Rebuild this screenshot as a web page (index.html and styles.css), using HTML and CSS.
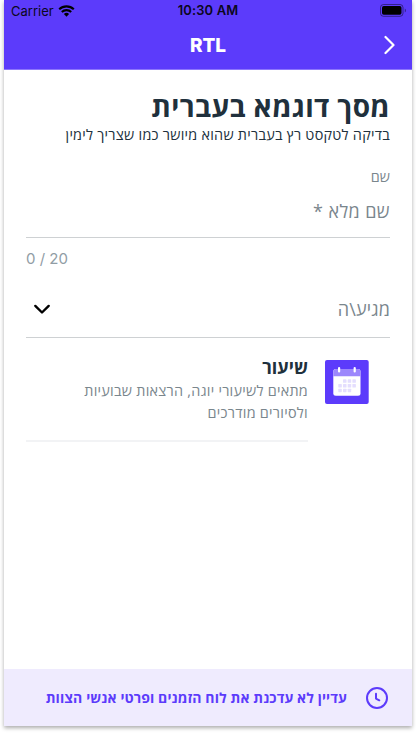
FILE: index.html
```html
<!DOCTYPE html>
<html lang="he" dir="rtl">
<head>
<meta charset="utf-8">
<meta name="viewport" content="width=device-width, initial-scale=1">
<title>RTL</title>
<link rel="stylesheet" href="styles.css">
</head>
<body>
<div class="phone">
  <header class="top">
    <div class="status" dir="ltr">
      <div class="carrier"><span>Carrier</span>
        <svg class="wifi" width="17" height="12" viewBox="0 0 17 12"><path d="M1.2 4.3a10.6 10.6 0 0 1 14.6 0M3.8 7a6.8 6.8 0 0 1 9.4 0" fill="none" stroke="#000" stroke-width="2.1"/><path d="M5.9 9a3.8 3.8 0 0 1 5.2 0L8.5 11.7z"/></svg>
      </div>
      <span class="clock">10:30 AM</span>
      <svg class="battery" width="27" height="13" viewBox="0 0 27 13"><rect x=".5" y=".5" width="22.5" height="11.8" rx="3" fill="none" stroke="#000" stroke-opacity=".45"/><rect x="2" y="2" width="19.5" height="8.8" rx="1.7"/><path d="M24.8 4.5v4c1.4-.7 1.4-3.3 0-4z" opacity=".5"/></svg>
    </div>
    <div class="nav">
      <h1 class="nav-title">RTL</h1>
      <svg class="back" width="12" height="20" viewBox="0 0 12 20"><path d="M1.5 2l8 8-8 8" fill="none" stroke="#fff" stroke-width="2.2" stroke-linecap="round" stroke-linejoin="round"/></svg>
    </div>
  </header>
  <main class="content">
    <h2 class="title">מסך דוגמא בעברית</h2>
    <p class="subtitle">בדיקה לטקסט רץ בעברית שהוא מיושר כמו שצריך לימין</p>
    <div class="label">שם</div>
    <div class="field name-field"><span class="name">שם מלא *</span></div>
    <div class="counter" dir="ltr">0 / 20</div>
    <div class="field select-field"><span class="select">מגיע\ה</span>
      <svg class="chevron" width="18" height="12" viewBox="0 0 18 12"><path d="M2.3 2.9L9 9.5l6.7-6.6" fill="none" stroke="#000" stroke-width="2.4" stroke-linecap="round" stroke-linejoin="round"/></svg>
    </div>
    <section class="item">
      <svg class="calendar" width="44" height="44" viewBox="0 0 44 44"><rect width="43.7" height="44" rx="2" fill="#5c3bfb"/><rect x="8.3" y="9" width="27.2" height="26.8" rx="2.5" fill="#fff"/><path d="M8.3 16.3V11.5A2.5 2.5 0 0 1 10.8 9H33a2.5 2.5 0 0 1 2.5 2.5v4.8z" fill="#9c87fc"/><path d="M14.1 8v3.5M29.7 8v3.5" stroke="#fff" stroke-width="2.2" stroke-linecap="round"/><g fill="#e4defe"><rect x="18" y="19.3" width="3.5" height="3.5" rx=".6"/><rect x="22.7" y="19.3" width="3.5" height="3.5" rx=".6"/><rect x="27.4" y="19.3" width="3.5" height="3.5" rx=".6"/><rect x="13.3" y="24" width="3.5" height="3.5" rx=".6"/><rect x="18" y="24" width="3.5" height="3.5" rx=".6"/><rect x="22.7" y="24" width="3.5" height="3.5" rx=".6"/><rect x="27.4" y="24" width="3.5" height="3.5" rx=".6"/><rect x="13.3" y="28.7" width="3.5" height="3.5" rx=".6"/><rect x="18" y="28.7" width="3.5" height="3.5" rx=".6"/><rect x="22.7" y="28.7" width="3.5" height="3.5" rx=".6"/></g></svg>
      <div class="item-body">
        <h3 class="item-title">שיעור</h3>
        <p class="item-text">מתאים לשיעורי יוגה, הרצאות שבועיות<br>ולסיורים מודרכים</p>
      </div>
    </section>
  </main>
  <footer class="notice">
    <svg class="time" width="24" height="24" viewBox="0 0 24 24"><g fill="none" stroke="#5c3bfb" stroke-linecap="round" stroke-linejoin="round"><circle cx="12" cy="12" r="10" stroke-width="2"/><path d="M11 7.7v4.9l3.3 1.7" stroke-width="2"/></g></svg>
    <span class="notice-text">עדיין לא עדכנת את לוח הזמנים ופרטי אנשי הצוות</span>
  </footer>
</div>
</body>
</html>
```

FILE: styles.css
```css
* { box-sizing: border-box; }
body { margin: 0; background: #fff; font-family: "Open Sans", "Liberation Sans", sans-serif; overflow: hidden; }
h1, h2, h3, p { margin: 0; }
svg { display: block; flex: none; }
.phone { width: 408px; height: 726px; margin: 0 4px 8px; display: flex; flex-direction: column; background: #fff; box-shadow: 0 2px 4px rgba(0, 0, 0, .33); }
.top { height: 70px; background: #5c3bfb; border-bottom: 1px solid #8d76fc; flex: none; font-family: Inter, sans-serif; }
.status { height: 22px; display: grid; grid-template-columns: 1fr auto 1fr; align-items: center; color: #0b0720; font-size: 13px; line-height: 22px; }
.carrier { display: flex; align-items: center; gap: 4px; padding-left: 7px; margin-top: -1px; }
.clock { font-weight: 600; font-size: 12.9px; letter-spacing: .15px; }
.battery { justify-self: end; margin-right: 5px; margin-top: -1px; }
.nav { height: 47px; display: grid; grid-template-columns: 1fr auto 1fr; align-items: center; direction: ltr; }
.nav-title { grid-column: 2; color: #fff; font-size: 19px; font-weight: 800; line-height: 24px; padding-top: 1px; }
.back { justify-self: end; margin-right: 16px; margin-top: -1px; }
.content { flex: 1; padding: 20px 22px 0; color: #20303c; }
.title { font-size: 28px; line-height: 32px; font-weight: 700; letter-spacing: .35px; white-space: nowrap; }
.subtitle { font-size: 14.4px; font-weight: 500; line-height: 26px; letter-spacing: .26px; white-space: nowrap; }
.label { margin-top: 19px; font-size: 14.4px; line-height: 20px; color: #7a868d; }
.field { border-bottom: 1px solid #ced1d3; display: flex; align-items: center; justify-content: space-between; color: #7a868d; font-size: 18px; white-space: nowrap; }
.name-field { height: 51px; padding-bottom: 3px; }
.name { letter-spacing: .4px; }
.counter { margin-top: 10px; font-family: Inter, sans-serif; font-size: 15px; line-height: 22px; color: #919da5; }
.select-field { height: 68px; padding-top: 11px; }
.select { letter-spacing: .15px; }
.chevron { margin-left: 7px; }
.item { display: flex; gap: 17px; padding: 22px 21px 0 0; }
.item-body { flex: 1; height: 83px; border-bottom: 2px solid #f2f3f5; margin-top: -1px; }
.item-title { font-size: 18px; line-height: 16px; font-weight: 700; }
.item-text { margin-top: 5px; font-size: 14.4px; line-height: 22px; letter-spacing: .27px; color: #7a868d; white-space: nowrap; }
.notice { height: 57px; flex: none; background: #efebfe; color: #5c3bfb; display: flex; align-items: center; gap: 18px; padding-right: 23px; }
.notice-text { font-size: 14px; font-weight: 700; letter-spacing: .1px; white-space: nowrap; padding-bottom: 1px; }
```
